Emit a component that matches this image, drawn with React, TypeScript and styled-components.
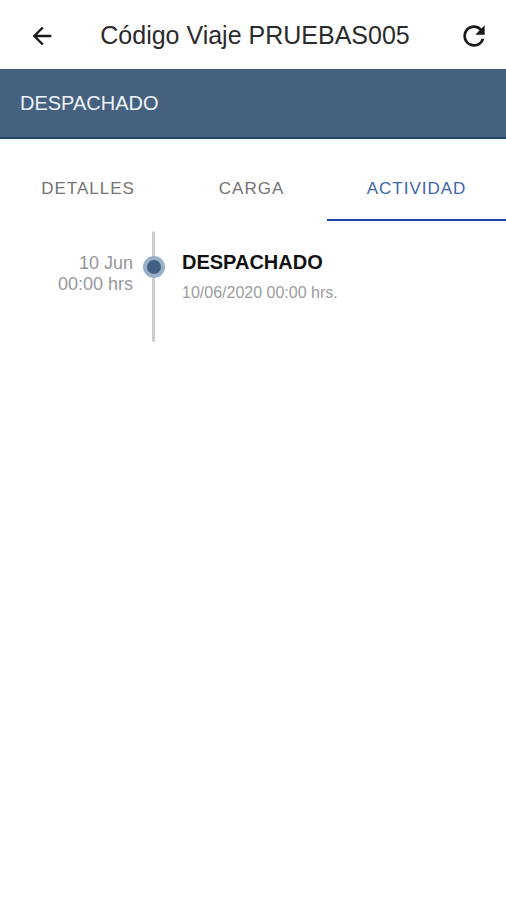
import React, { useState } from "react";
import styled, { createGlobalStyle } from "styled-components";
import { MdArrowBack, MdRefresh } from "react-icons/md";

const GlobalStyle = createGlobalStyle`
  * { box-sizing: border-box; }
  body {
    margin: 0;
    background: #fff;
    color: #1c1c1c;
    font-family: "Liberation Sans", Arial, sans-serif;
  }
`;

const Header = styled.header`
  display: flex;
  align-items: center;
  justify-content: space-between;
  height: 69px;
  padding: 2px 16px 0 28px;
`;

const IconButton = styled.button`
  display: flex;
  padding: 0;
  border: 0;
  background: none;
  color: #1a1a1a;
  cursor: pointer;
`;

const Title = styled.h1`
  margin: 0;
  padding: 0 4px 2px 0;
  font-size: 25px;
  line-height: 32px;
  font-weight: 400;
  color: #2b2b2b;
  text-align: center;
`;

const StatusBar = styled.div`
  padding: 20px;
  border-bottom: 2px solid #1f4a6c;
  background: #46617f;
  color: #eef3fa;
  font-size: 20px;
  line-height: 28px;
`;

const TabList = styled.div`
  display: grid;
  grid-template-columns: 176fr 151fr 179fr;
  height: 82px;
  padding-top: 18px;
`;

const Tab = styled.button<{ $active: boolean }>`
  padding: 2px 0 0;
  border: 0;
  border-bottom: 2px solid ${(p) => (p.$active ? "#1d44a0" : "transparent")};
  background: none;
  color: ${(p) => (p.$active ? "#3c66ad" : "#737373")};
  font-family: inherit;
  font-size: 17px;
  letter-spacing: 1px;
  cursor: pointer;
`;

const Timeline = styled.ol`
  margin: 0;
  padding: 10px 0 0;
  list-style: none;
`;

const Event = styled.li`
  display: grid;
  grid-template-columns: 133px 42px 1fr;
  min-height: 111px;
`;

const When = styled.time`
  padding-top: 22px;
  color: #96979b;
  font-size: 18px;
  line-height: 21px;
  text-align: right;
`;

const Rail = styled.div`
  display: flex;
  justify-content: center;
  width: 3px;
  margin-left: 19px;
  border-radius: 2px;
  background: #cecece;
`;

const Dot = styled.span`
  flex: none;
  width: 22px;
  height: 22px;
  margin-top: 25px;
  border: 4px solid #9ab0c8;
  border-radius: 50%;
  background: #426084;
`;

const Info = styled.div`
  padding: 19px 16px 0 7px;
`;

const EventTitle = styled.h2`
  margin: 0 0 9px;
  font-size: 20px;
  line-height: 24px;
  font-weight: 700;
  color: #111;
`;

const EventText = styled.p`
  margin: 0;
  color: #9b9ca0;
  font-size: 16px;
  line-height: 20px;
`;

const tabs = ["DETALLES", "CARGA", "ACTIVIDAD"];

export default function App() {
  const [active, setActive] = useState("ACTIVIDAD");
  return (
    <>
      <GlobalStyle />
      <Header>
        <IconButton aria-label="Volver">
          <MdArrowBack size={28} />
        </IconButton>
        <Title>Código Viaje PRUEBAS005</Title>
        <IconButton aria-label="Actualizar">
          <MdRefresh size={32} />
        </IconButton>
      </Header>
      <StatusBar>DESPACHADO</StatusBar>
      <TabList role="tablist">
        {tabs.map((name) => (
          <Tab
            key={name}
            role="tab"
            aria-selected={name === active}
            $active={name === active}
            onClick={() => setActive(name)}
          >
            {name}
          </Tab>
        ))}
      </TabList>
      <Timeline>
        <Event>
          <When dateTime="2020-06-10T00:00">
            10 Jun
            <br />
            00:00 hrs
          </When>
          <Rail>
            <Dot />
          </Rail>
          <Info>
            <EventTitle>DESPACHADO</EventTitle>
            <EventText>10/06/2020 00:00 hrs.</EventText>
          </Info>
        </Event>
      </Timeline>
    </>
  );
}
